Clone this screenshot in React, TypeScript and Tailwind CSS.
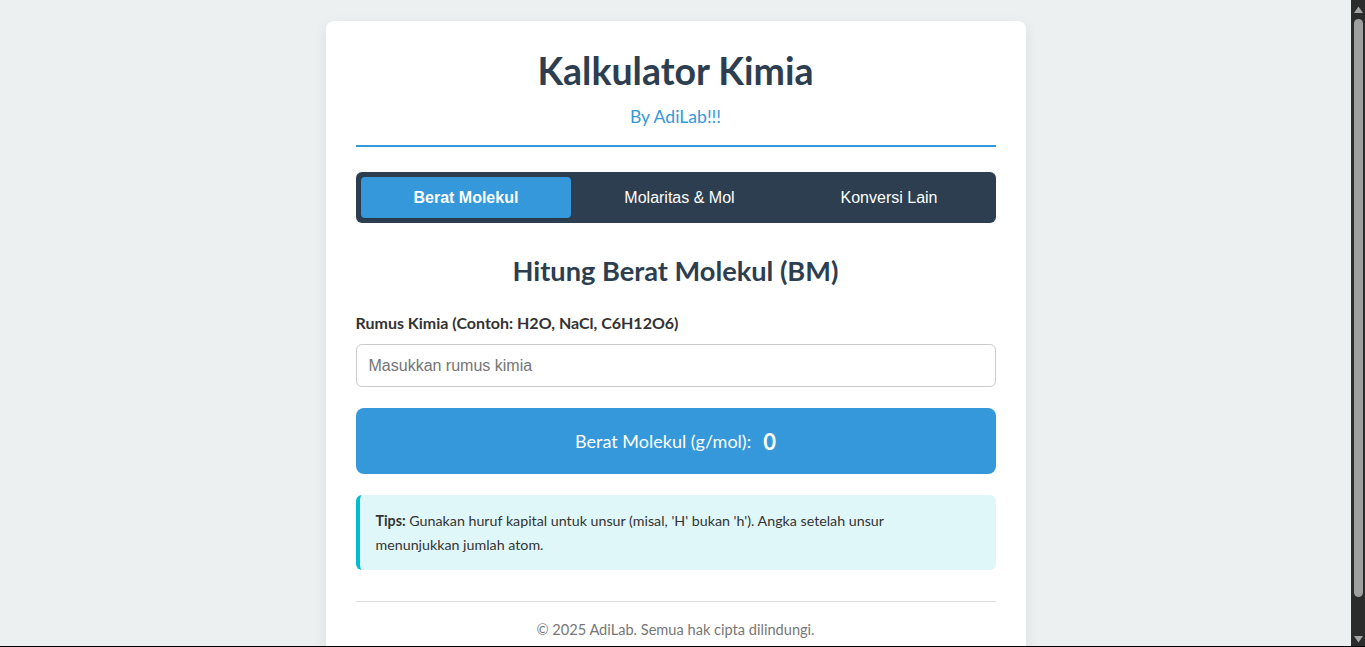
import React, { useState } from 'react';

const TABS = ['Berat Molekul', 'Molaritas & Mol', 'Konversi Lain'];

function Scrollbar() {
  return (
    <div className="flex h-full w-[14px] shrink-0 flex-col bg-[#2b2b2b] pl-[3px]">
      <svg width="9" height="7" viewBox="0 0 9 7" className="mt-[6px]">
        <path d="M4.5 0.5 L9 7 L0 7 Z" fill="#a3a3a3" />
      </svg>
      <div className="mt-[6px] h-[578px] w-[9px] rounded-full bg-[#9f9f9f]" />
      <div className="flex-1" />
      <svg width="9" height="7" viewBox="0 0 9 7" className="mb-[3px]">
        <path d="M0 0 L9 0 L4.5 6.5 Z" fill="#a3a3a3" />
      </svg>
    </div>
  );
}

export default function App() {
  const [active, setActive] = useState(0);
  const [formula, setFormula] = useState('');

  return (
    <div className="flex h-screen border-b border-black bg-[#ecf0f1] font-['Segoe_UI',Lato,sans-serif] text-[#333]">
      <div className="flex-1 overflow-y-auto [scrollbar-width:none]">
        <div className="pt-[21px] pb-5">
          <div className="mx-auto w-[700px] rounded-lg bg-white p-[30px] shadow-[0_4px_14px_rgba(0,0,0,0.08)]">
            <header className="border-b-2 border-[#3498db] pb-4 text-center">
              <h1 className="text-[37.5px] font-bold leading-[40px] text-[#2c3e50]">Kalkulator Kimia</h1>
              <p className="mt-[14px] text-[17.6px] leading-6 text-[#3498db]">By AdiLab!!!</p>
            </header>

            <div className="mt-[25px] flex rounded-md bg-[#2c3e50] p-[5px]">
              {TABS.map((t, i) => (
                <button
                  key={t}
                  onClick={() => setActive(i)}
                  className={`h-[41px] grow rounded px-3 font-['Liberation_Sans',Arial,sans-serif] text-base text-white ${
                    active === i ? 'bg-[#3498db] font-bold shadow-sm' : ''
                  }`}
                >
                  {t}
                </button>
              ))}
            </div>

            <h2 className="mt-[30px] text-center text-[27.2px] font-bold leading-9 text-[#2c3e50]">
              Hitung Berat Molekul (BM)
            </h2>

            <label className="mt-[24px] block text-[16px] font-bold leading-5 text-[#333]">
              Rumus Kimia (Contoh: H2O, NaCl, C6H12O6)
            </label>
            <input
              value={formula}
              onChange={(e) => setFormula(e.target.value)}
              placeholder="Masukkan rumus kimia"
              className="mt-[11px] block h-[43px] w-full rounded-md border border-[#ccc] px-3 font-['Liberation_Sans',Arial,sans-serif] text-base outline-none placeholder:text-[#757575]"
            />

            <div className="mt-[21px] flex h-[66px] items-center justify-center gap-3 rounded-lg bg-[#3498db] text-white">
              <span className="text-[18px]">Berat Molekul (g/mol):</span>
              <span className="text-[22px] font-bold">0</span>
            </div>

            <div className="mt-[21px] rounded-md border-l-4 border-[#00bcd4] bg-[#e0f7fa] pb-[13px] pl-4 pr-4 pt-[14px] text-[14.25px] leading-6 text-[#333]">
              <strong>Tips:</strong> Gunakan huruf kapital untuk unsur (misal, 'H' bukan 'h'). Angka setelah unsur
              <br />
              menunjukkan jumlah atom.
            </div>

            <footer className="mt-[31px] border-t border-[#ddd] pt-[18px] text-center text-[14.6px] leading-5 text-[#777]">
              © 2025 AdiLab. Semua hak cipta dilindungi.
            </footer>
          </div>
        </div>
      </div>
      <Scrollbar />
    </div>
  );
}
